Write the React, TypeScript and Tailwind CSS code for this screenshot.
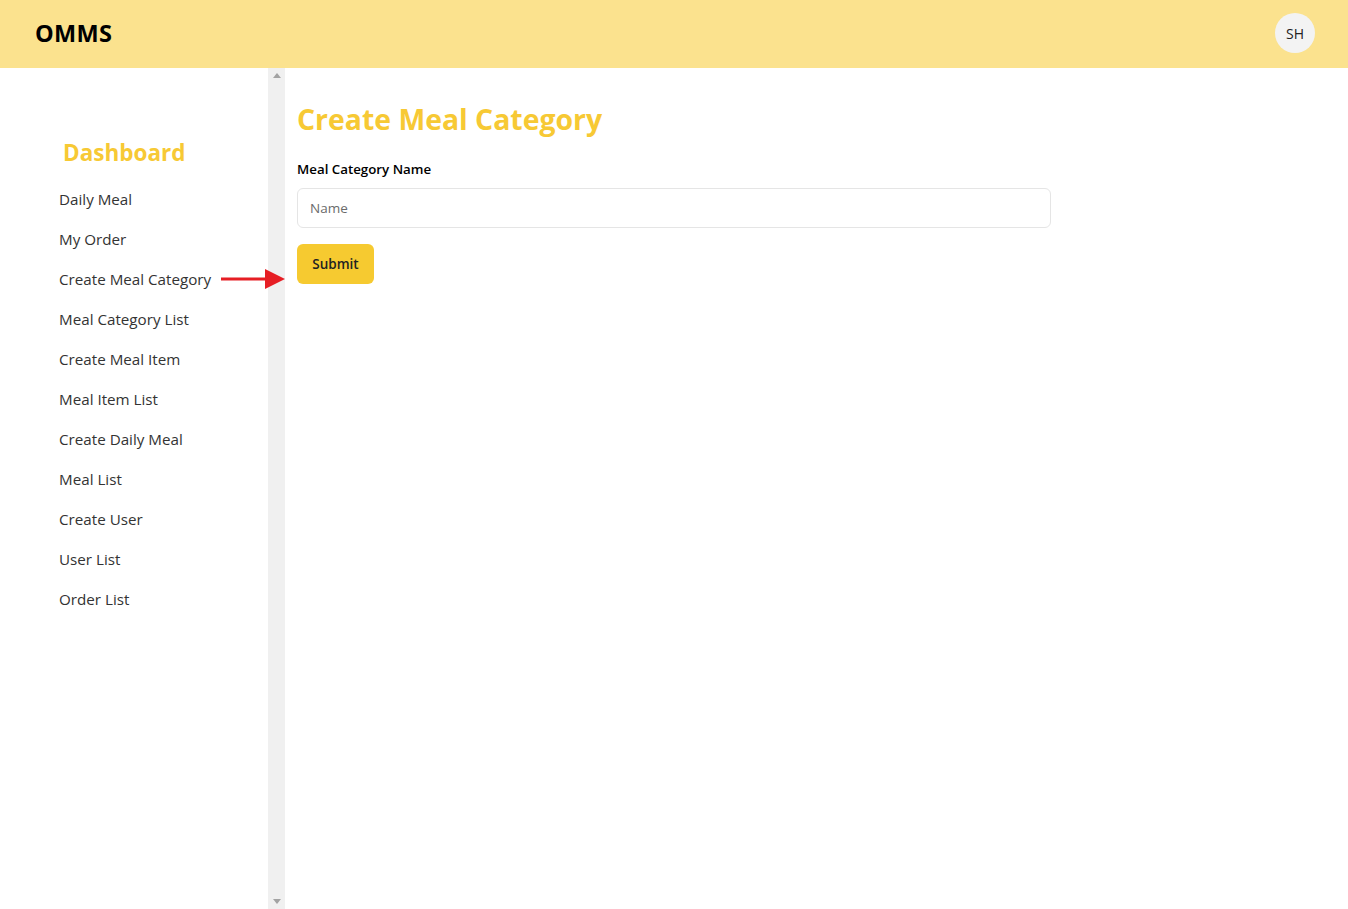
import React from "react";

const links = [
  "Daily Meal",
  "My Order",
  "Create Meal Category",
  "Meal Category List",
  "Create Meal Item",
  "Meal Item List",
  "Create Daily Meal",
  "Meal List",
  "Create User",
  "User List",
  "Order List",
];

export default function App() {
  return (
    <div
      className="w-[1348px] h-[909px] flex flex-col bg-white text-[#222] overflow-hidden"
      style={{ fontFamily: '"Open Sans", "Noto Sans", sans-serif' }}
    >
      <header className="h-[68px] shrink-0 bg-[#fbe28e] flex items-center justify-between pl-[35px] pr-[33px]">
        <h1 className="text-[23.5px] font-bold text-black tracking-[0.3px]">OMMS</h1>
        <div className="w-10 h-10 mb-[2px] rounded-full bg-[#f3f3f3] flex items-center justify-center text-[14px] text-[#222]">
          SH
        </div>
      </header>

      <div className="flex flex-1 min-h-0">
        <aside className="w-[268px] shrink-0 pt-[70px]">
          <h2 className="pl-[63px] text-[22.5px] font-bold text-[#f7c934] leading-[30px] mb-[11px]">
            Dashboard
          </h2>
          <nav className="flex flex-col">
            {links.map((l) => (
              <a
                key={l}
                className="pl-[59px] h-10 flex items-center text-[15.2px] text-[#333] relative"
              >
                {l}
                {l === "Create Meal Category" && (
                  <svg
                    className="absolute left-[221px] top-[10px]"
                    width="64"
                    height="20"
                    viewBox="0 0 64 20"
                  >
                    <rect x="0" y="8.5" width="46" height="3" fill="#e61e24" />
                    <polygon points="44,0 64,10 44,20" fill="#e61e24" />
                  </svg>
                )}
              </a>
            ))}
          </nav>
        </aside>

        <div className="w-[17px] shrink-0 bg-[#f0f0f0] flex flex-col justify-between items-center py-[5px]">
          <svg width="8" height="5" viewBox="0 0 8 5">
            <polygon points="4,0 8,5 0,5" fill="#a3a3a3" />
          </svg>
          <svg width="8" height="5" viewBox="0 0 8 5">
            <polygon points="0,0 8,0 4,5" fill="#a3a3a3" />
          </svg>
        </div>

        <main className="flex-1 pl-3 pt-[31px]">
          <h1 className="text-[28.4px] font-bold text-[#f7c934] leading-10">
            Create Meal Category
          </h1>
          <label className="block mt-[20px] text-[13.3px] font-semibold text-black leading-5">
            Meal Category Name
          </label>
          <input
            placeholder="Name"
            className="mt-[9px] w-[754px] h-10 rounded-md border border-[#e5e5e5] px-3 text-[13.5px] placeholder:text-[#6b6b6b] outline-none"
          />
          <button className="mt-4 block w-[77px] h-10 rounded-md bg-[#f6ca30] text-[13.5px] font-semibold text-[#222]">
            Submit
          </button>
        </main>
      </div>
    </div>
  );
}
